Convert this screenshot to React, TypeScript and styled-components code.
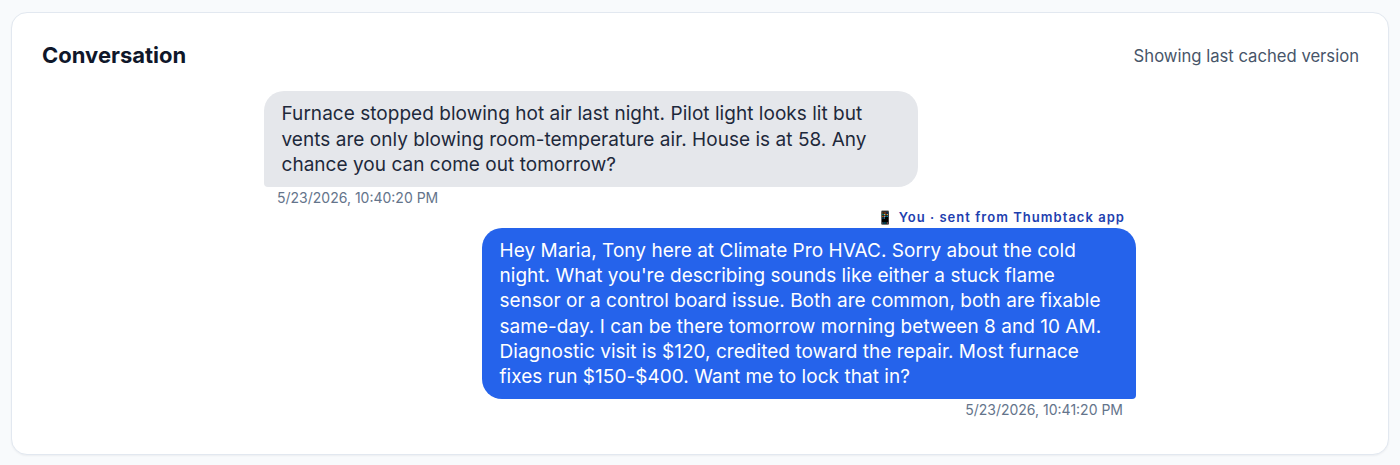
import React from "react";
import styled, { createGlobalStyle } from "styled-components";

const Global = createGlobalStyle`
  html, body { margin: 0; padding: 0; background: #f8fafc; }
  body { font-family: Inter, "Noto Sans", sans-serif; }
  * { box-sizing: border-box; }
`;

const Page = styled.div`
  padding: 12px 11px 10px 11px;
  height: 465px;
`;

const Card = styled.section`
  background: #fff;
  border: 1px solid #e2e8f0;
  border-radius: 16px;
  box-shadow: 0 1px 2px rgba(15,23,42,0.05);
  padding: 24px 29px 29px 30px;
  height: 443px;
`;

const Header = styled.header`
  display: flex;
  justify-content: space-between;
  align-items: center;
  margin-bottom: 16px;
  height: 38px;
`;

const Title = styled.h2`
  margin: 0 0 2px;
  font-size: 22px;
  line-height: 36px;
  font-weight: 700;
  color: #0f172a;
`;

const Status = styled.span`
  font-size: 16.65px;
  color: #475569;
`;

const Thread = styled.div`
  display: flex;
  flex-direction: column;
  width: 872px;
  margin-left: 222px;
`;

const Message = styled.div<{ $mine?: boolean }>`
  display: flex;
  flex-direction: column;
  align-items: ${(p) => (p.$mine ? "flex-end" : "flex-start")};
`;

const Bubble = styled.div<{ $mine?: boolean }>`
  width: 654px;
  padding: 10.4px 18px 9.6px 17.5px;
  font-size: 19px;
  line-height: 25.2px;
  letter-spacing: 0.035px;
  color: ${(p) => (p.$mine ? "#ffffff" : "#1e293b")};
  background: ${(p) => (p.$mine ? "#2563eb" : "#e5e7eb")};
  border-radius: ${(p) => (p.$mine ? "20px 20px 4px 20px" : "20px 20px 20px 4px")};
`;

const Time = styled.div`
  font-size: 14px;
  line-height: 20px;
  color: #64748b;
  margin-top: 1px;
  padding: 0 13px;
`;

const Sender = styled.div`
  font-size: 13px;
  line-height: 18px;
  font-weight: 600;
  letter-spacing: 1.03px;
  color: #1e40af;
  padding: 0 11px;
  margin-bottom: 2px;
`;

export default function App() {
  return (
    <>
      <Global />
      <Page>
        <Card>
          <Header>
            <Title>Conversation</Title>
            <Status>Showing last cached version</Status>
          </Header>
          <Thread>
            <Message>
              <Bubble>
                Furnace stopped blowing hot air last night. Pilot light looks lit but vents are only blowing room-temperature air. House is at 58. Any chance you can come out tomorrow?
              </Bubble>
              <Time>5/23/2026, 10:40:20 PM</Time>
            </Message>
            <Message $mine>
              <Sender>📱 You · sent from Thumbtack app</Sender>
              <Bubble $mine>
                Hey Maria, Tony here at Climate Pro HVAC. Sorry about the cold night. What you're describing sounds like either a stuck flame sensor or a control board issue. Both are common, both are fixable same-day. I can be there tomorrow morning between 8 and 10 AM. Diagnostic visit is $120, credited toward the repair. Most furnace fixes run $150-$400. Want me to lock that in?
              </Bubble>
              <Time>5/23/2026, 10:41:20 PM</Time>
            </Message>
          </Thread>
        </Card>
      </Page>
    </>
  );
}
